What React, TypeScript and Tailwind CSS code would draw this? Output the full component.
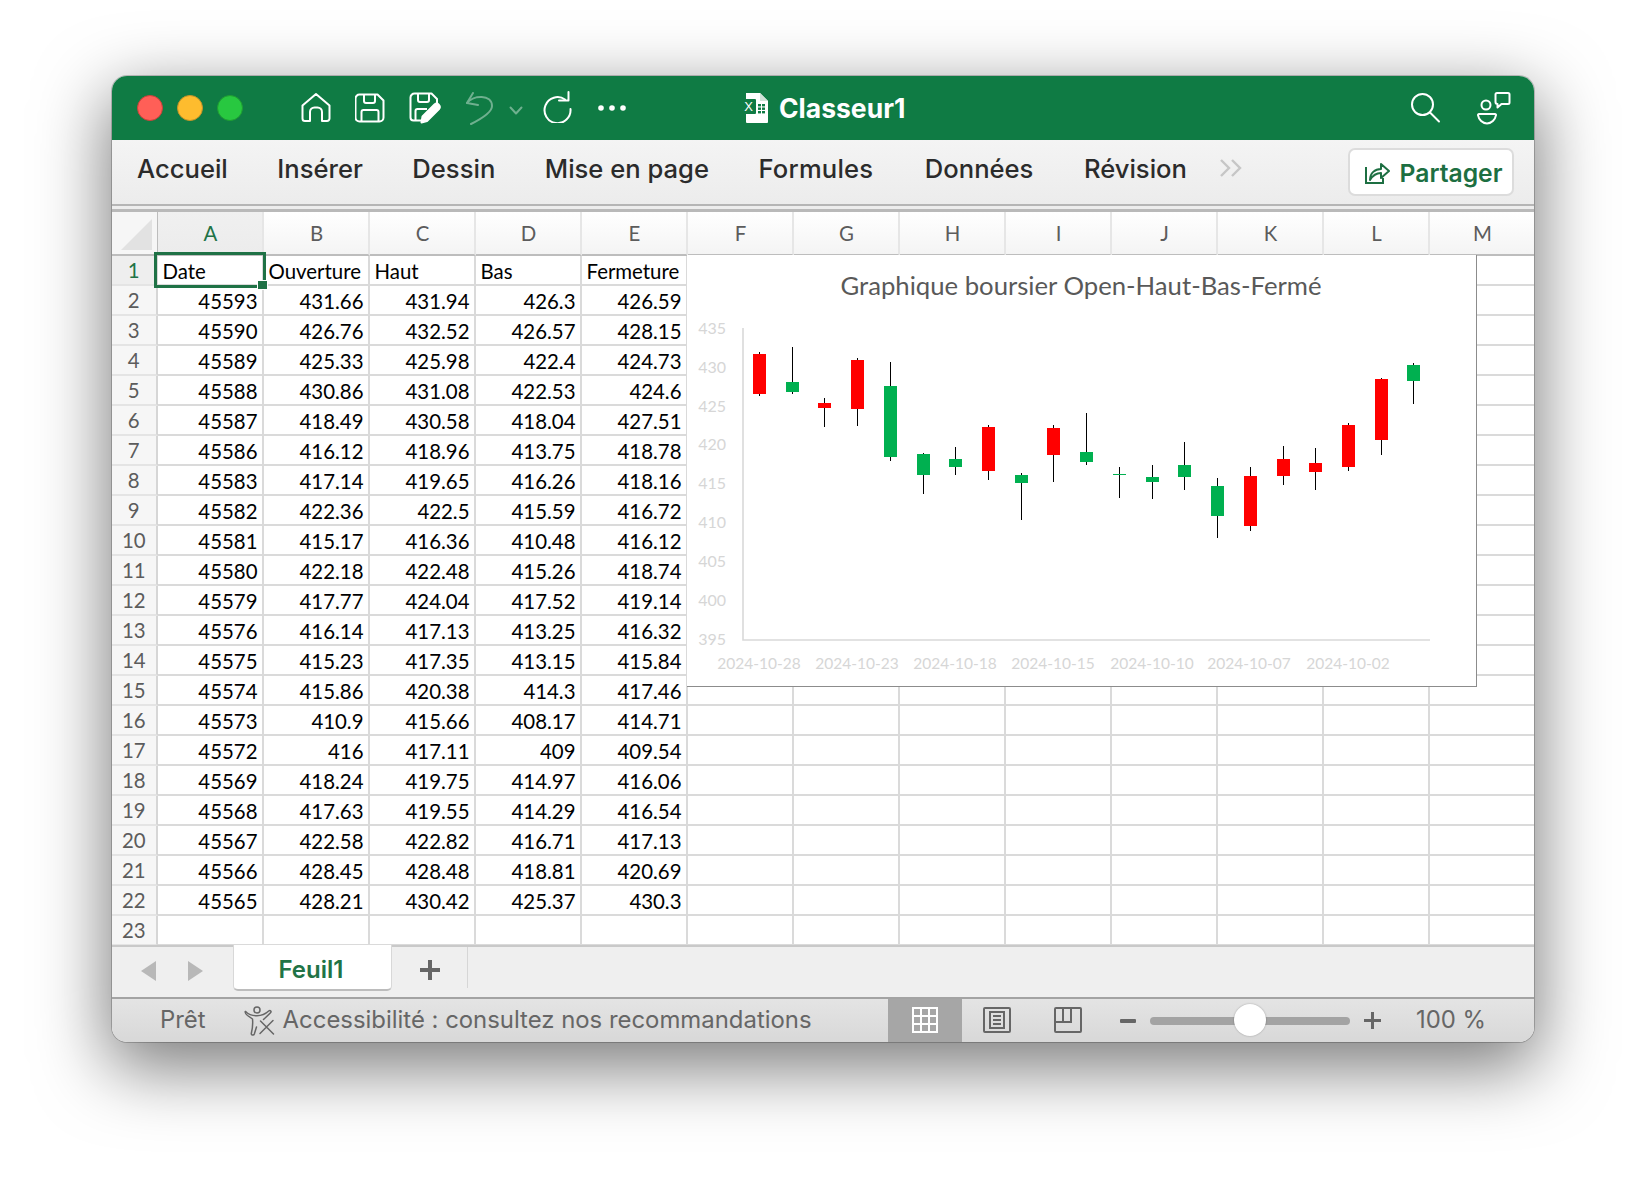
import React from "react";

const columns = ["A", "B", "C", "D", "E", "F", "G", "H", "I", "J", "K", "L", "M"];

const rows: (string | number)[][] = [
  [45593, 431.66, 431.94, 426.3, 426.59],
  [45590, 426.76, 432.52, 426.57, 428.15],
  [45589, 425.33, 425.98, 422.4, 424.73],
  [45588, 430.86, 431.08, 422.53, 424.6],
  [45587, 418.49, 430.58, 418.04, 427.51],
  [45586, 416.12, 418.96, 413.75, 418.78],
  [45583, 417.14, 419.65, 416.26, 418.16],
  [45582, 422.36, 422.5, 415.59, 416.72],
  [45581, 415.17, 416.36, 410.48, 416.12],
  [45580, 422.18, 422.48, 415.26, 418.74],
  [45579, 417.77, 424.04, 417.52, 419.14],
  [45576, 416.14, 417.13, 413.25, 416.32],
  [45575, 415.23, 417.35, 413.15, 415.84],
  [45574, 415.86, 420.38, 414.3, 417.46],
  [45573, 410.9, 415.66, 408.17, 414.71],
  [45572, 416, 417.11, 409, 409.54],
  [45569, 418.24, 419.75, 414.97, 416.06],
  [45568, 417.63, 419.55, 414.29, 416.54],
  [45567, 422.58, 422.82, 416.71, 417.13],
  [45566, 428.45, 428.48, 418.81, 420.69],
  [45565, 428.21, 430.42, 425.37, 430.3],
];

const headers = ["Date", "Ouverture", "Haut", "Bas", "Fermeture"];

// candles in page pixels: center x, wick top, body top, body bottom, wick bottom, rising
const candles: [number, number, number, number, number, boolean][] = [
  [759.5, 352, 354, 394, 396, false],
  [792.5, 347, 382, 392, 394, true],
  [824.5, 398, 403, 408, 427, false],
  [857.5, 358, 360, 409, 426, false],
  [890.5, 362, 386, 457, 461, true],
  [923.5, 453, 454, 475, 494, true],
  [955.5, 447, 459, 467, 475, true],
  [988.5, 425, 427, 471, 480, false],
  [1021.5, 473, 475, 483, 520, true],
  [1053.5, 425, 428, 455, 482, false],
  [1086.5, 413, 452, 462, 465, true],
  [1119.5, 467, 474, 475, 498, true],
  [1152.5, 465, 477, 482, 499, true],
  [1184.5, 442, 465, 477, 490, true],
  [1217.5, 478, 486, 516, 538, true],
  [1250.5, 467, 476, 526, 531, false],
  [1283.5, 446, 459, 476, 485, false],
  [1315.5, 448, 463, 472, 490, false],
  [1348.5, 423, 425, 467, 471, false],
  [1381.5, 378, 379, 440, 455, false],
  [1413.5, 363, 365, 381, 404, true],
];

const yLabels: [string, number][] = [
  ["435", 328],
  ["430", 367],
  ["425", 406],
  ["420", 444.5],
  ["415", 483.5],
  ["410", 522.5],
  ["405", 561.5],
  ["400", 600.5],
  ["395", 639.5],
];

const xLabels: [string, number][] = [
  ["2024-10-28", 759],
  ["2024-10-23", 857],
  ["2024-10-18", 955],
  ["2024-10-15", 1053],
  ["2024-10-10", 1152],
  ["2024-10-07", 1249],
  ["2024-10-02", 1348],
];

function HomeIcon() {
  return (
    <svg width="30" height="32" viewBox="0 0 30 32" fill="none" stroke="white" strokeWidth="2" strokeLinejoin="round" className="ml-[26px]">
      <path d="M4 29a2.5 2.5 0 0 1-2.5-2.5V13.5L15 2l13.5 11.5v13A2.5 2.5 0 0 1 26 29h-5V20a4.5 4.5 0 0 0-4.5-4.5h-3A4.5 4.5 0 0 0 9 20v9z" />
    </svg>
  );
}

function SaveIcon() {
  return (
    <svg width="30" height="30" viewBox="0 0 30 30" fill="none" stroke="white" strokeWidth="2" strokeLinejoin="round" className="ml-[24px]">
      <path d="M4.5 1.5h18l6 6v17a4 4 0 0 1-4 4h-20a4 4 0 0 1-4-4v-19a4 4 0 0 1 4-4z" />
      <path d="M9 1.5V8a2 2 0 0 0 2 2h7a2 2 0 0 0 2-2V1.5" />
      <path d="M6.5 28.5V19a2 2 0 0 1 2-2h13a2 2 0 0 1 2 2v9.5" />
    </svg>
  );
}

function SaveEditIcon() {
  return (
    <svg width="32" height="32" viewBox="0 0 32 32" fill="none" stroke="white" strokeWidth="2" strokeLinejoin="round" className="ml-[24px]">
      <path d="M14 28.5H4.5a3 3 0 0 1-3-3v-20a4 4 0 0 1 4-4h17l5.5 5.5v6" />
      <path d="M9 1.5V8a2 2 0 0 0 2 2h7a2 2 0 0 0 2-2V1.5" />
      <path d="M6.5 28V19a2 2 0 0 1 2-2H18" />
      <path d="M13.5 24.5 25.5 12.5a3.2 3.2 0 0 1 4.5 4.5L18 29l-5.5 1.5z" fill="white" />
    </svg>
  );
}

function UndoIcon() {
  return (
    <svg width="30" height="34" viewBox="0 0 30 34" fill="none" stroke="white" strokeWidth="2" strokeLinecap="round" strokeLinejoin="round" className="ml-[24px] opacity-40">
      <path d="M8 2 2 12l11 2" />
      <path d="M2 12C8 4 27 3 27 15c0 7-13 14-21 18" />
    </svg>
  );
}

function Chevron() {
  return (
    <svg width="14" height="9" viewBox="0 0 14 9" fill="none" stroke="white" strokeWidth="2" strokeLinecap="round" strokeLinejoin="round" className="ml-[14px] mt-[4px] opacity-40">
      <path d="m1.5 1.5 5.5 6 5.5-6" />
    </svg>
  );
}

function RedoIcon() {
  return (
    <svg width="30" height="32" viewBox="0 0 30 32" fill="none" stroke="white" strokeWidth="2" strokeLinecap="round" strokeLinejoin="round" className="ml-[19px] -mt-[2px]">
      <path d="M23 8.5A13 13 0 1 0 28.5 18" />
      <path d="M26.5 1v8.5H17" />
    </svg>
  );
}

function DotsIcon() {
  return (
    <svg width="28" height="6" viewBox="0 0 28 6" fill="white" className="ml-[26px]">
      <circle cx="3" cy="3" r="2.8" />
      <circle cx="14" cy="3" r="2.8" />
      <circle cx="25" cy="3" r="2.8" />
    </svg>
  );
}

function ExcelFileIcon() {
  return (
    <svg width="27" height="30" viewBox="0 0 27 30" className="mr-[11px]">
      <path d="M5 0h14l8 8v21a1 1 0 0 1-1 1H6a1 1 0 0 1-1-1z" fill="white" />
      <path d="M19 0l8 8h-8z" fill="#cfe3d8" />
      <rect x="0" y="6" width="15" height="15" rx="1" fill="#0f7b44" />
      <text x="7.5" y="18" fontSize="13" fontFamily="Liberation Sans, sans-serif" textAnchor="middle" fill="white">
        X
      </text>
      <g fill="#0f7b44">
        <rect x="17" y="11" width="3" height="2.4" />
        <rect x="21" y="11" width="3" height="2.4" />
        <rect x="17" y="14.5" width="3" height="2.4" />
        <rect x="21" y="14.5" width="3" height="2.4" />
        <rect x="17" y="18" width="3" height="2.4" />
        <rect x="21" y="18" width="3" height="2.4" />
      </g>
    </svg>
  );
}

function SearchIcon() {
  return (
    <svg width="30" height="30" viewBox="0 0 30 30" fill="none" stroke="white" strokeWidth="2" strokeLinecap="round">
      <circle cx="11.5" cy="11.5" r="10.5" />
      <path d="M19 19.5 28 28.5" />
    </svg>
  );
}

function PeopleIcon() {
  return (
    <svg width="34" height="33" viewBox="0 0 34 33" fill="none" stroke="white" strokeWidth="2" strokeLinejoin="round" className="ml-[36px]">
      <circle cx="9" cy="13" r="4.5" />
      <path d="M2 22h16a1 1 0 0 1 1 1.2c-.8 4.6-4.5 8.3-9 8.3s-8.2-3.7-9-8.3A1 1 0 0 1 2 22z" />
      <path d="M18.5 2.5a1.5 1.5 0 0 1 1.5-1.5h11a1.5 1.5 0 0 1 1.5 1.5v8a1.5 1.5 0 0 1-1.5 1.5h-6.5l-4 3.5V12a2 2 0 0 1-2-2z" />
    </svg>
  );
}

function ShareIcon() {
  return (
    <svg width="25" height="24" viewBox="0 0 25 24" fill="none" stroke="#1d6f42" strokeWidth="2" className="mr-[10px]">
      <path d="M1 7v16h17v-5" />
      <path d="M5 20c0-7 5-11 11-11V4l8 7-8 7v-5c-5 0-8 2-11 7z" strokeLinejoin="round" />
    </svg>
  );
}

function AccessibilityIcon() {
  return (
    <svg width="31" height="30" viewBox="0 0 31 30" fill="none" stroke="#666" strokeWidth="1.5" strokeLinejoin="round" strokeLinecap="round" className="ml-[38px] mr-[8px]">
      <circle cx="13" cy="4" r="3" />
      <path d="M1.5 5.5C5 9 9 9.8 13 9.8s8-1.3 12-5c1.2-.8 2.8.6 1.5 2C24 9.5 21 12 19.5 13.5" />
      <path d="M1.5 5.5C.5 7 2 8.3 3.5 9.5L8.5 13c.4 4 .2 9-1.2 14.5-.4 1.5 2.4 2.2 3 .5l2.2-7" />
      <path d="m16 27.5 13-13M16.5 15l13 13" />
    </svg>
  );
}

function GridViewIcon() {
  return (
    <svg width="26" height="26" viewBox="0 0 26 26" fill="none" stroke="white" strokeWidth="2" className="mb-[2px]">
      <rect x="1" y="1" width="24" height="24" />
      <path d="M9 1v24M17 1v24M1 9h24M1 17h24" />
    </svg>
  );
}

function PageViewIcon() {
  return (
    <svg width="28" height="26" viewBox="0 0 28 26" fill="none" stroke="#666" strokeWidth="2">
      <rect x="1" y="1" width="26" height="24" rx="1" />
      <rect x="7" y="5" width="14" height="16" />
      <path d="M10 9h8M10 13h8M10 17h8" />
    </svg>
  );
}

function BreakViewIcon() {
  return (
    <svg width="28" height="26" viewBox="0 0 28 26" fill="none" stroke="#666" strokeWidth="2">
      <rect x="1" y="1" width="26" height="24" rx="1" />
      <path d="M1 15h16V1M9 1v14" />
    </svg>
  );
}

function StockChart() {
  return (
    <div className="absolute left-[575px] top-[43px] w-[790px] h-[432px] bg-white border-r border-b border-[#8c8c8c]">
      <svg width="790" height="432" viewBox="687 255 790 432" className="font-['Lato',sans-serif]">
        <text x="1081" y="295" textAnchor="middle" fontSize="25.7" fill="#595959">
          Graphique boursier Open-Haut-Bas-Fermé
        </text>
        <path d="M743 328V640H1430" fill="none" stroke="#d9d9d9" strokeWidth="1.6" />
        {yLabels.map(([label, y]) => (
          <text key={label} x="726" y={y + 5.5} textAnchor="end" fontSize="16" fill="#d6d6d6">
            {label}
          </text>
        ))}
        {xLabels.map(([label, x]) => (
          <text key={label} x={x} y="669" textAnchor="middle" fontSize="15.5" fill="#d6d6d6">
            {label}
          </text>
        ))}
        {candles.map(([x, hi, top, bottom, lo, up]) => (
          <g key={x}>
            <path d={`M${x} ${hi}V${lo}`} stroke="black" strokeWidth="1" />
            <rect x={x - 6.5} y={top} width="13" height={bottom - top} fill={up ? "#00b050" : "#ff0000"} />
          </g>
        ))}
      </svg>
    </div>
  );
}

function Sheet() {
  return (
    <div className="relative h-[733px] bg-white font-['Lato',sans-serif] text-[20.4px] overflow-hidden">
      <div className="grid grid-cols-[45.5px_repeat(13,106px)] grid-rows-[44px_repeat(23,30px)]">
        <div className="border-r border-b-2 border-[#bdbdbd] bg-[#f6f6f6] relative">
          <svg width="32" height="31" viewBox="0 0 32 31" className="absolute left-[9px] top-[7px]">
            <path d="M31 0V31H0z" fill="#e2e2e2" />
          </svg>
        </div>
        {columns.map((c) => (
          <div
            key={c}
            className={`flex items-center justify-center pl-[2px] border-r-2 border-b-2 border-r-[#e6e6e6] border-b-[#bdbdbd] bg-linear-to-b ${
              c === "A" ? "from-[#f0f0f0] to-[#ececec] text-[#217346]" : "from-white to-[#f4f4f4] text-[#5c5c5c]"
            }`}
          >
            {c}
          </div>
        ))}
        {Array.from({ length: 23 }).map((_, r) => (
          <React.Fragment key={r}>
            <div
              className={`flex items-center justify-center pt-[1px] border-r-2 border-b-2 border-r-[#d6d6d6] border-b-[#e4e4e4] ${
                r === 0 ? "bg-[#eeeeee] text-[#217346]" : "bg-[#f6f6f6] text-[#5c5c5c]"
              }`}
            >
              {r + 1}
            </div>
            {columns.map((c, i) => {
              const value = r === 0 ? headers[i] : rows[r - 1]?.[i];
              return (
                <div
                  key={c}
                  className={`flex items-center pt-[2px] border-r-2 border-b-2 border-[#dadada] text-black whitespace-nowrap overflow-hidden ${
                    r === 0 ? "justify-start pl-[5px]" : "justify-end pr-[4px]"
                  }`}
                >
                  {value}
                </div>
              );
            })}
          </React.Fragment>
        ))}
      </div>
      <StockChart />
      <div className="absolute left-[42px] top-[40px] w-[112px] h-[36px] border-[3px] border-[#1f7246]" />
      <div className="absolute left-[145px] top-[68px] w-[11px] h-[10px] bg-[#1f7246] border border-white" />
    </div>
  );
}

export default function App() {
  return (
    <div className="w-[1646px] h-[1190px] bg-white pt-[76px] pl-[112px] overflow-hidden">
      <div className="w-[1422px] h-[966px] flex flex-col rounded-[15px] overflow-hidden shadow-[0_0_0_1px_rgba(0,0,0,0.2),0_22px_70px_4px_rgba(0,0,0,0.52)] font-['Inter',sans-serif]">
        <div className="h-[64px] shrink-0 bg-[#0f7b44] flex items-center pl-[25px] pr-[23px]">
          <div className="flex gap-[14px]">
            <div className="w-[26px] h-[26px] rounded-full bg-[#ff5f57] border border-[#cf3f3a]" />
            <div className="w-[26px] h-[26px] rounded-full bg-[#febc2e] border border-[#c99327]" />
            <div className="w-[26px] h-[26px] rounded-full bg-[#28c840] border border-[#1f9c32]" />
          </div>
          <div className="flex items-center ml-[32px]">
            <HomeIcon />
            <SaveIcon />
            <SaveEditIcon />
            <UndoIcon />
            <Chevron />
            <RedoIcon />
            <DotsIcon />
          </div>
          <div className="flex items-center ml-[115px]">
            <ExcelFileIcon />
            <span className="text-white text-[26.5px] font-bold leading-none">Classeur1</span>
          </div>
          <div className="flex items-center ml-auto">
            <SearchIcon />
            <PeopleIcon />
          </div>
        </div>

        <div className="h-[72px] shrink-0 flex flex-col bg-linear-to-b from-[#f4f4f4] to-[#ebebeb]">
          <div className="h-[64px] flex items-start pl-[25px] pr-[20px]">
            <div className="flex items-center gap-[49.5px] text-[25.6px] font-medium text-[#2b2b2b] h-[58px]">
              <span>Accueil</span>
              <span>Insérer</span>
              <span>Dessin</span>
              <span>Mise en page</span>
              <span className="tracking-[0.2px]">Formules</span>
              <span className="ml-[2px]">Données</span>
              <span className="ml-[1px]">Révision</span>
            </div>
            <svg width="24" height="18" viewBox="0 0 24 18" fill="none" stroke="#c6c6c6" strokeWidth="2.4" className="ml-[32px] mt-[19px]">
              <path d="M2 1l8 8-8 8M13 1l8 8-8 8" />
            </svg>
            <div className="ml-auto mt-[8px] w-[166px] h-[48px] flex items-center justify-center pl-[5px] bg-white border-2 border-[#dcdcdc] rounded-[7px] text-[24.7px] font-semibold text-[#1d6f42]">
              <ShareIcon />
              <span className="mt-[3px]">Partager</span>
            </div>
          </div>
          <div className="h-[2px] bg-[#b5b5b5]" />
          <div className="h-[3px] bg-[#ededed]" />
          <div className="h-[3px] bg-[#b9b9b9]" />
        </div>

        <Sheet />

        <div className="h-[52px] shrink-0 relative flex bg-[#efefef] border-t-2 border-[#c9c9c9]">
          <div className="flex items-center gap-[32px] pl-[29px] h-[48px]">
            <svg width="15" height="20" viewBox="0 0 15 20" fill="#b8b8b8">
              <path d="M15 0v20L0 10z" />
            </svg>
            <svg width="15" height="20" viewBox="0 0 15 20" fill="#b8b8b8">
              <path d="M0 0v20l15-10z" />
            </svg>
          </div>
          <div className="ml-[30px] -mt-[2px] w-[159px] h-[46px] flex items-center justify-center pt-[5px] pr-[3px] bg-white rounded-b-[5px] border-b-2 border-x border-[#bcbcbc] border-x-[#d8d8d8] text-[24px] font-semibold text-[#217346]">
            Feuil1
          </div>
          <svg width="20" height="20" viewBox="0 0 20 20" fill="#666" className="ml-[28px] mt-[13px]">
            <path d="M8 0h4v8h8v4h-8v8H8v-8H0V8h8z" />
          </svg>
          <div className="ml-[27px] w-[1px] h-[41px] bg-[#d6d6d6]" />
        </div>

        <div className="h-[45px] shrink-0 flex items-center border-t-2 border-[#a3a3a3] bg-linear-to-b from-[#e4e4e4] to-[#d8d8d8] text-[23.9px] text-[#666] pl-[48px]">
          <span className="mb-[2px]">Prêt</span>
          <AccessibilityIcon />
          <span className="mb-[2px]">Accessibilité : consultez nos recommandations</span>
          <div className="ml-auto flex items-center h-full">
            <div className="w-[74px] h-full flex items-center justify-center bg-[#a6a6a6]">
              <GridViewIcon />
            </div>
            <div className="ml-[21px] mb-[2px]">
              <PageViewIcon />
            </div>
            <div className="ml-[43px] mb-[2px]">
              <BreakViewIcon />
            </div>
            <div className="ml-[38px] w-[16px] h-[4px] bg-[#666] rounded-[1px]" />
            <div className="relative ml-[14px] w-[200px] h-[8px] rounded-full bg-[#a3a3a3]">
              <div className="absolute left-[84px] -top-[13px] w-[32px] h-[32px] rounded-full bg-white shadow-[0_0_2px_rgba(0,0,0,0.3)]" />
            </div>
            <svg width="17" height="17" viewBox="0 0 17 17" fill="#666" className="ml-[14px]">
              <path d="M7 0h3v7h7v3h-7v7H7v-7H0V7h7z" />
            </svg>
            <span className="ml-[35px] mr-[48px] mb-[2px]">100 %</span>
          </div>
        </div>
      </div>
    </div>
  );
}
